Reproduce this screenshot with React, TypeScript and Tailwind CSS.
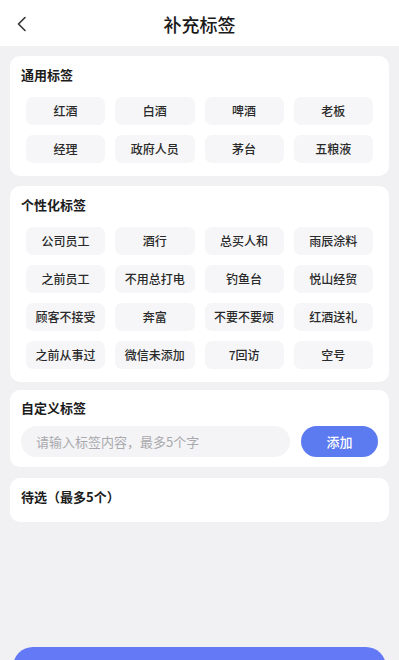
import React from "react";

const common = ["红酒", "白酒", "啤酒", "老板", "经理", "政府人员", "茅台", "五粮液"];
const personal = [
  "公司员工", "酒行", "总买人和", "雨辰涂料",
  "之前员工", "不用总打电", "钓鱼台", "悦山经贸",
  "顾客不接受", "奔富", "不要不要烦", "红酒送礼",
  "之前从事过", "微信未添加", "7回访", "空号",
];

function Tag({ label }: { label: string }) {
  return (
    <div className="h-[28px] rounded-[7px] bg-[#f6f6f8] flex items-center justify-center text-[12px] font-medium text-[#2a2a2a]">
      {label}
    </div>
  );
}

function Title({ children }: { children: React.ReactNode }) {
  return <div className="h-[20px] leading-[20px] text-[13px] font-semibold text-[#1c1c1c]">{children}</div>;
}

export default function App() {
  return (
    <div
      className="h-[660px] w-[399px] overflow-hidden bg-[#f1f1f3] flex flex-col"
      style={{ fontFamily: '"Noto Sans CJK SC", "Noto Sans", sans-serif' }}
    >
      <div className="h-[46px] bg-white flex items-center relative shrink-0">
        <svg className="absolute left-[16px] top-[16px]" width="12" height="16" viewBox="0 0 12 16" fill="none">
          <path d="M9 1.5 L2.5 8 L9 14.5" stroke="#333" strokeWidth="1.6" strokeLinecap="round" strokeLinejoin="round" />
        </svg>
        <div className="w-full text-center text-[18px] font-medium text-[#1a1a1a] leading-[24px] mt-[2px]">补充标签</div>
      </div>

      <div className="mx-[10px] mt-[10px] bg-white rounded-[10px] px-[11px] pt-[9px] pb-[13px]">
        <Title>通用标签</Title>
        <div className="mt-[12px] px-[5px] grid grid-cols-4 gap-x-[10px] gap-y-[10px]">
          {common.map((t) => (
            <Tag key={t} label={t} />
          ))}
        </div>
      </div>

      <div className="mx-[10px] mt-[10px] bg-white rounded-[10px] px-[11px] pt-[9px] pb-[13px]">
        <Title>个性化标签</Title>
        <div className="mt-[12px] px-[5px] grid grid-cols-4 gap-x-[10px] gap-y-[10px]">
          {personal.map((t) => (
            <Tag key={t} label={t} />
          ))}
        </div>
      </div>

      <div className="mx-[10px] mt-[8px] bg-white rounded-[10px] px-[11px] pt-[8px] pb-[10px]">
        <Title>自定义标签</Title>
        <div className="mt-[8px] flex gap-[11px]">
          <div className="flex-1 h-[31px] rounded-full bg-[#f4f4f6] flex items-center pl-[15px] text-[13px] text-[#a9a9ad]">
            请输入标签内容，最多5个字
          </div>
          <div className="w-[77px] h-[31px] rounded-full bg-[#5d7bf1] flex items-center justify-center text-[13px] font-medium text-white">
            添加
          </div>
        </div>
      </div>

      <div className="mx-[10px] mt-[11px] bg-white rounded-[10px] px-[11px] pt-[9px] pb-[15px]">
        <Title>待选（最多5个）</Title>
      </div>

      <div className="mx-[13px] mt-[125px] h-[44px] shrink-0 rounded-[20px] bg-[#6479f6]" />
    </div>
  );
}
